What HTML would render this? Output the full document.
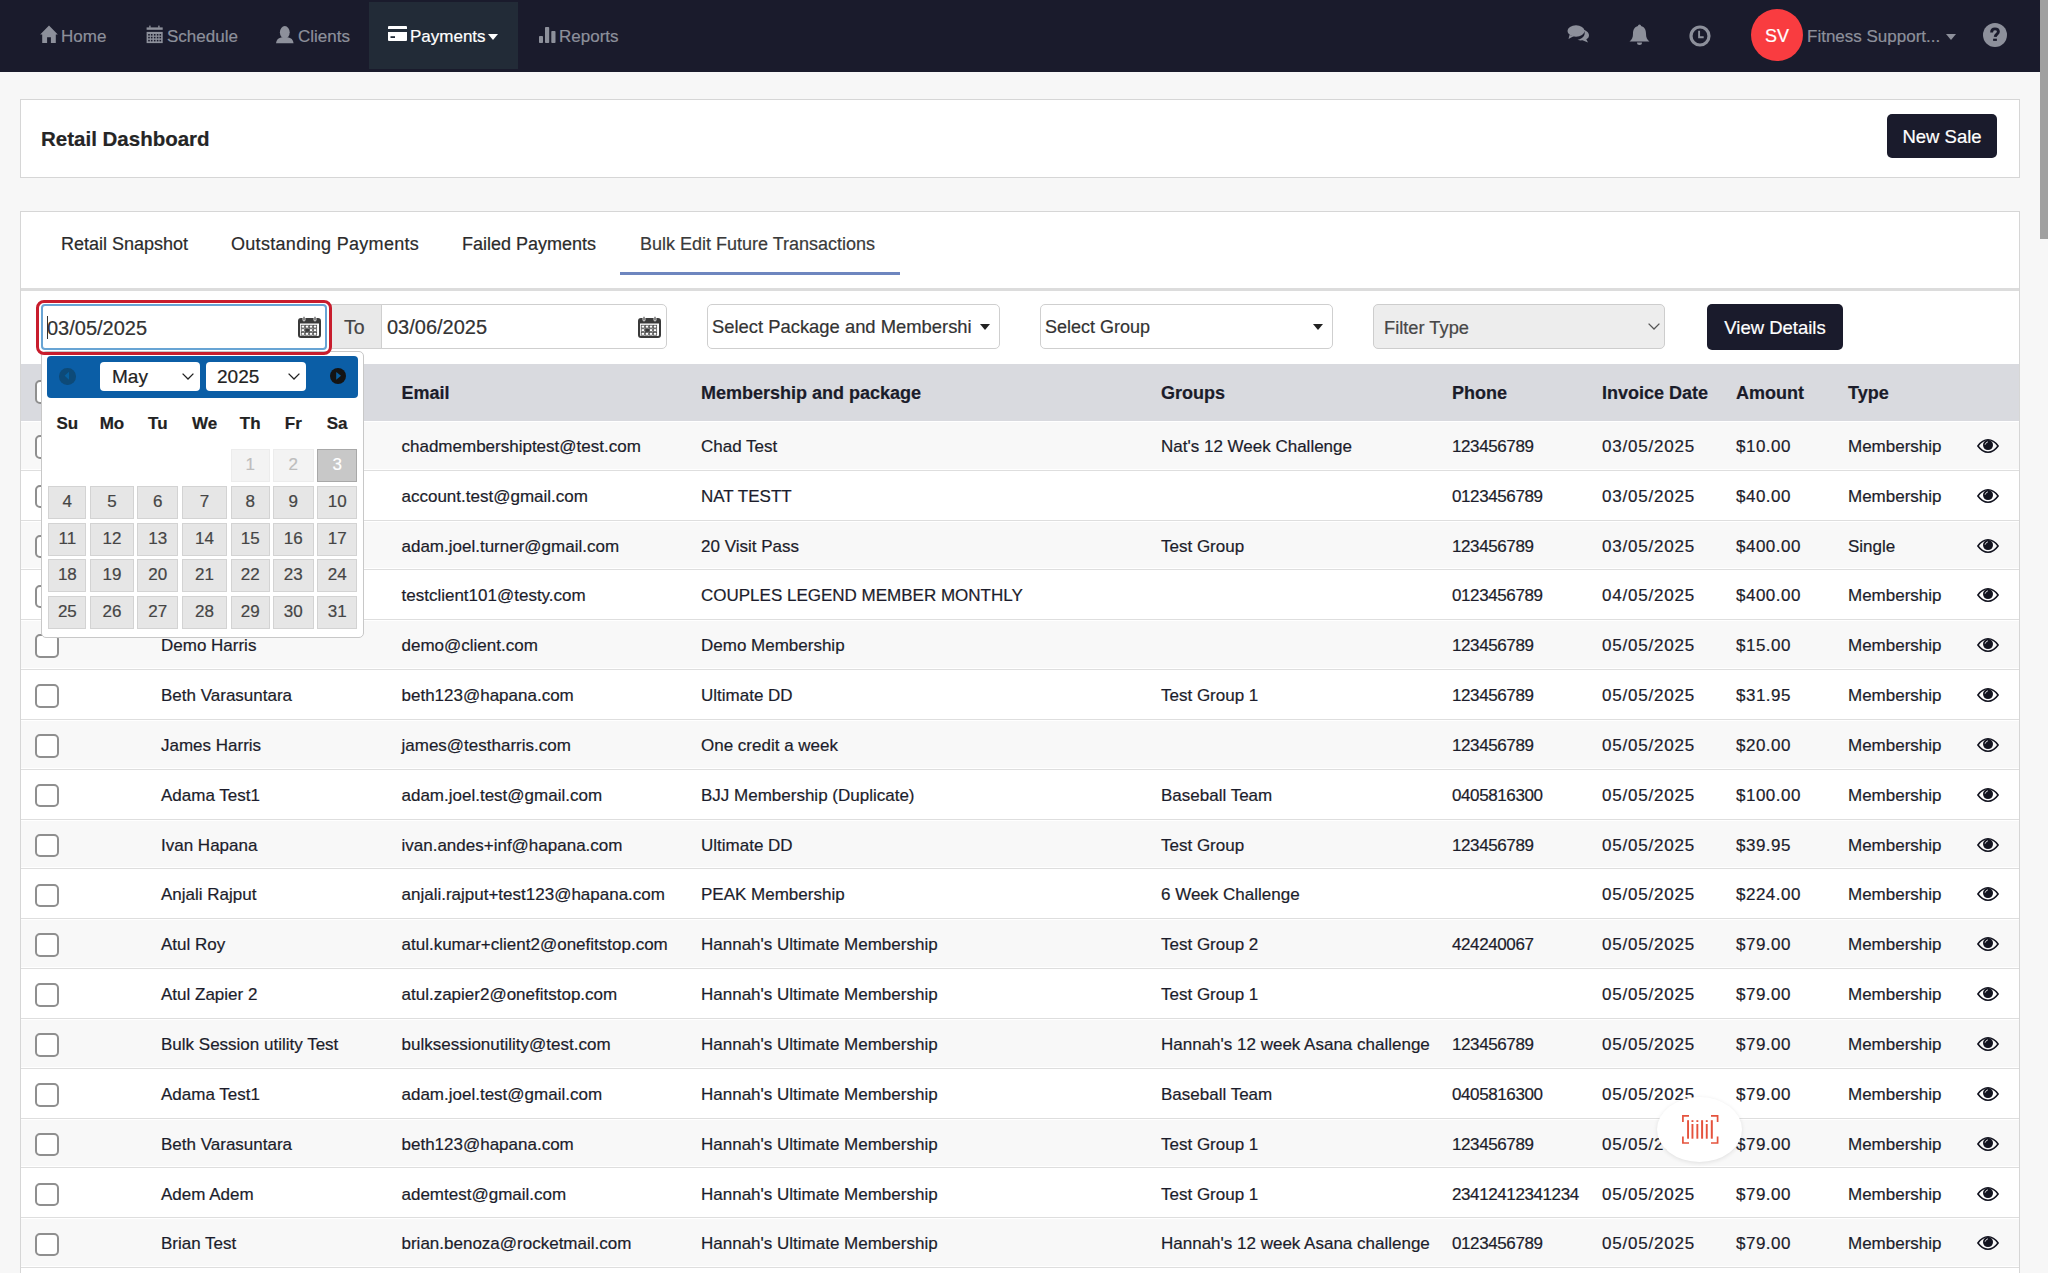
<!DOCTYPE html>
<html><head><meta charset="utf-8">
<style>
*{box-sizing:border-box;margin:0;padding:0}
html,body{width:2048px;height:1273px;overflow:hidden}
body{background:#f7f7f7;font-family:"Liberation Sans",sans-serif;color:#1b1c2a;position:relative;-webkit-text-stroke:0.2px currentColor}
.a{position:absolute}
.nt{position:absolute;top:0;height:72px;line-height:74px;font-size:17px;color:#8d909b;white-space:nowrap}
.ni{position:absolute;line-height:0}
.ni svg{display:block}
.card{position:absolute;background:#fff;border:1px solid #d6d6d6}
.tab{position:absolute;top:224px;line-height:40px;font-size:18px;color:#2b2b2b;white-space:nowrap}
.row{position:absolute;left:21px;width:1998px;height:49.84px;border-bottom:1px solid #dedede}
.row span{position:absolute;top:0;line-height:51px;font-size:17px;color:#1c1d2b;white-space:nowrap}
.cb{position:absolute;left:13.5px;top:14.2px;width:24px;height:23.5px;border:2px solid #8f8f8f;border-radius:5px;background:#fff}
.hd{position:absolute;top:364px;line-height:59px;font-size:18px;font-weight:bold;color:#1b1c2a;white-space:nowrap}
.eye{display:block}
.inp{position:absolute;background:#fff;border:1px solid #cfcfcf;border-radius:4px}
.itxt{position:absolute;font-size:19.5px;color:#333;white-space:nowrap;line-height:44px;top:0}
.cal{position:absolute;left:41px;top:351px;width:323px;height:287px;background:#fff;border:1px solid #c8c8c8;border-radius:5px}
.dn{position:absolute;top:407px;line-height:34px;font-size:17px;font-weight:bold;color:#222;white-space:nowrap}
.d{position:absolute;height:33px;line-height:30px;text-align:center;font-size:17px;color:#454545;background:#e6e6e6;border:1px solid #d3d3d3}
</style></head><body>

<div class="a" style="left:0;top:0;width:2040px;height:72px;background:#1a1b2c"></div>
<div class="a" style="left:369px;top:2px;width:149px;height:67px;background:#222b37"></div>
<div class="ni" style="left:40px;top:25px"><svg width="18" height="19" viewBox="0 0 18 19"><path d="M9 0.6 L17.8 9.6 L15.8 9.6 L15.8 18 L10.9 18 L10.9 12.2 L7.1 12.2 L7.1 18 L2.2 18 L2.2 9.6 L0.2 9.6 Z" fill="#8d909b"/></svg></div><div class="nt" style="left:61px">Home</div>
<div class="ni" style="left:146px;top:25px"><svg width="17" height="19" viewBox="0 0 17 19"><g fill="#8d909b"><rect x="3.2" y="0.6" width="1.4" height="2.2"/><rect x="12.2" y="0.6" width="1.4" height="2.2"/><rect x="0.6" y="2.4" width="16.1" height="2.4"/><rect x="0.6" y="6.9" width="16.1" height="11.2"/></g><g fill="#1a1b2c"><rect x="2.20" y="9.00" width="1.6" height="1.6"/><rect x="4.90" y="9.00" width="1.6" height="1.6"/><rect x="7.90" y="9.00" width="1.6" height="1.6"/><rect x="10.80" y="9.00" width="1.6" height="1.6"/><rect x="13.50" y="9.00" width="1.6" height="1.6"/><rect x="2.20" y="11.80" width="1.6" height="1.6"/><rect x="4.90" y="11.80" width="1.6" height="1.6"/><rect x="7.90" y="11.80" width="1.6" height="1.6"/><rect x="10.80" y="11.80" width="1.6" height="1.6"/><rect x="13.50" y="11.80" width="1.6" height="1.6"/><rect x="2.20" y="14.80" width="1.6" height="1.6"/><rect x="4.90" y="14.80" width="1.6" height="1.6"/><rect x="7.90" y="14.80" width="1.6" height="1.6"/><rect x="10.80" y="14.80" width="1.6" height="1.6"/><rect x="13.50" y="14.80" width="1.6" height="1.6"/></g></svg></div><div class="nt" style="left:167px">Schedule</div>
<div class="ni" style="left:276px;top:26px"><svg width="18" height="18" viewBox="0 0 18 18"><ellipse cx="8.8" cy="6.3" rx="4.9" ry="6.2" fill="#8d909b"/><path d="M0 17.2 C0.3 13.6 2.6 11.8 5.8 11.2 L11.8 11.2 C15 11.8 17.3 13.6 17.6 17.2 Z" fill="#8d909b"/></svg></div><div class="nt" style="left:298px">Clients</div>
<div class="ni" style="left:388px;top:26px"><svg width="19" height="15" viewBox="0 0 19 15"><rect x="0" y="0" width="19" height="15" rx="1" fill="#ffffff"/><rect x="0" y="3" width="19" height="3" fill="#222c38"/><rect x="2.5" y="10.2" width="4.5" height="1.8" fill="#222c38"/></svg></div><div class="nt" style="left:410px;color:#fff">Payments</div><div class="ni" style="left:488px;top:34px"><svg width="10" height="6" viewBox="0 0 10 6"><path d="M0 0 L10 0 L5 6 Z" fill="#ffffff"/></svg></div>
<div class="ni" style="left:539px;top:27px"><svg width="17" height="16" viewBox="0 0 17 16"><rect x="0" y="9" width="4" height="7" rx="0.8" fill="#8d909b"/><rect x="6" y="0" width="4.2" height="16" rx="0.8" fill="#8d909b"/><rect x="12.3" y="4" width="4.2" height="12" rx="0.8" fill="#8d909b"/></svg></div><div class="nt" style="left:559px">Reports</div>
<div class="ni" style="left:1567px;top:25px"><svg width="23" height="18" viewBox="0 0 23 18"><ellipse cx="9" cy="6" rx="8.5" ry="5.8" fill="#8d909b"/><path d="M2.5 10 L1.5 14 L7 11 Z" fill="#8d909b"/><path d="M14.5 4.3 C19 5 22 7.5 22 10.2 C22 12 21 13.4 19.3 14.3 L21 17.5 L15.5 15.3 C14 15.6 12 15.4 10.5 14.8 C15 14 18.5 11 17.5 7 C17 5.8 16 5 14.5 4.3 Z" fill="#8d909b"/></svg></div>
<div class="ni" style="left:1629px;top:24px"><svg width="21" height="22" viewBox="0 0 21 22"><path d="M10.5 0.5 C11.5 0.5 12 1.3 12 2 C15.5 2.8 17 5.8 17 9.5 C17 13.5 18 15.5 20.5 17.5 L0.5 17.5 C3 15.5 4 13.5 4 9.5 C4 5.8 5.5 2.8 9 2 C9 1.3 9.5 0.5 10.5 0.5 Z" fill="#8d909b"/><path d="M8 18.5 A2.5 2.5 0 0 0 13 18.5 Z" fill="#8d909b"/></svg></div>
<div class="ni" style="left:1689.3px;top:24.6px"><svg width="22" height="22" viewBox="0 0 22 22"><circle cx="11" cy="11" r="9" fill="none" stroke="#8d909b" stroke-width="3.2"/><path d="M10.1 5.8 V12.2 H14.7" fill="none" stroke="#8d909b" stroke-width="1.9"/></svg></div>
<div class="a" style="left:1751px;top:9px;width:52px;height:52px;border-radius:50%;background:#f93c40;color:#fff;font-size:18px;line-height:54px;text-align:center">SV</div>
<div class="nt" style="left:1807px">Fitness Support...</div><div class="ni" style="left:1946px;top:34px"><svg width="10" height="6" viewBox="0 0 10 6"><path d="M0 0 L10 0 L5 6 Z" fill="#8d909b"/></svg></div>
<div class="ni" style="left:1983px;top:23px"><svg width="24" height="24" viewBox="0 0 24 24"><circle cx="12" cy="12" r="12" fill="#8d909b"/><path d="M8.6 9.4 C8.6 7 10 5.9 11.9 5.9 C14 5.9 15.4 7.1 15.4 8.8 C15.4 10.9 12.4 11.3 12.2 13.8" fill="none" stroke="#1a1b2c" stroke-width="2.9"/><rect x="10.1" y="15.7" width="3.8" height="2.2" fill="#1a1b2c"/></svg></div>
<div class="a" style="left:2040px;top:0;width:8px;height:239px;background:#a0a0a0"></div>
<div class="card" style="left:20px;top:99px;width:2000px;height:79px"></div>
<div class="a" style="left:41px;top:99px;line-height:79px;font-size:20.5px;font-weight:bold;color:#252525">Retail Dashboard</div>
<div class="a" style="left:1887px;top:114px;width:110px;height:44px;background:#1a1b2c;border-radius:5px;color:#fff;font-size:18.5px;line-height:46px;text-align:center">New Sale</div>
<div class="card" style="left:20px;top:211px;width:2000px;height:1080px"></div>
<div class="tab" style="left:61px">Retail Snapshot</div>
<div class="tab" style="left:231px;letter-spacing:0.3px">Outstanding Payments</div>
<div class="tab" style="left:462px">Failed Payments</div>
<div class="tab" style="left:640px;color:#3a3a3a">Bulk Edit Future Transactions</div>
<div class="a" style="left:620px;top:272px;width:280px;height:3px;background:#6e86bf"></div>
<div class="a" style="left:21px;top:288px;width:1998px;height:3px;background:#dcdcdc"></div>
<div class="inp" style="left:41px;top:304px;width:286px;height:46px;border:2px solid #68a4d4"></div>
<div class="itxt" style="left:47px;top:305px;line-height:46px;font-size:20px">03/05/2025</div>
<div class="a" style="left:46.5px;top:316px;width:1.5px;height:23px;background:#333"></div>
<div class="ni" style="left:298px;top:316px"><svg width="23" height="22" viewBox="0 0 23 22"><rect x="1" y="3" width="21" height="18" rx="2" fill="none" stroke="#3a3a3a" stroke-width="2"/><rect x="1" y="3" width="21" height="4.5" fill="#3a3a3a"/><rect x="5" y="0.5" width="2" height="4.5" rx="1" fill="#3a3a3a" stroke="#fff" stroke-width="0.8"/><rect x="16" y="0.5" width="2" height="4.5" rx="1" fill="#3a3a3a" stroke="#fff" stroke-width="0.8"/><rect x="3.20" y="9.20" width="3.2" height="2.8" fill="none" stroke="#3a3a3a" stroke-width="0.7"/><rect x="7.30" y="9.20" width="3.2" height="2.8" fill="none" stroke="#3a3a3a" stroke-width="0.7"/><rect x="11.40" y="9.20" width="3.2" height="2.8" fill="none" stroke="#3a3a3a" stroke-width="0.7"/><rect x="15.50" y="9.20" width="3.2" height="2.8" fill="none" stroke="#3a3a3a" stroke-width="0.7"/><rect x="3.20" y="12.80" width="3.2" height="2.8" fill="none" stroke="#3a3a3a" stroke-width="0.7"/><rect x="7.30" y="12.80" width="3.2" height="2.8" fill="none" stroke="#3a3a3a" stroke-width="0.7"/><rect x="11.40" y="12.80" width="3.2" height="2.8" fill="none" stroke="#3a3a3a" stroke-width="0.7"/><rect x="15.50" y="12.80" width="3.2" height="2.8" fill="none" stroke="#3a3a3a" stroke-width="0.7"/><rect x="3.20" y="16.40" width="3.2" height="2.8" fill="none" stroke="#3a3a3a" stroke-width="0.7"/><rect x="7.30" y="16.40" width="3.2" height="2.8" fill="none" stroke="#3a3a3a" stroke-width="0.7"/><rect x="11.40" y="16.40" width="3.2" height="2.8" fill="none" stroke="#3a3a3a" stroke-width="0.7"/><rect x="15.50" y="16.40" width="3.2" height="2.8" fill="none" stroke="#3a3a3a" stroke-width="0.7"/><rect x="7.3" y="12.8" width="4.1" height="3" fill="#3a3a3a"/></svg></div>
<div class="a" style="left:331px;top:304px;width:51px;height:45px;background:#e9e9e9;border:1px solid #d0d0d0;border-right:none"></div>
<div class="itxt" style="left:344px;top:305px;line-height:45px;color:#444">To</div>
<div class="inp" style="left:381px;top:304px;width:286px;height:45px;border-radius:0 5px 5px 0"></div>
<div class="itxt" style="left:387px;top:305px;line-height:45px;font-size:20px">03/06/2025</div>
<div class="ni" style="left:638px;top:316px"><svg width="23" height="22" viewBox="0 0 23 22"><rect x="1" y="3" width="21" height="18" rx="2" fill="none" stroke="#3a3a3a" stroke-width="2"/><rect x="1" y="3" width="21" height="4.5" fill="#3a3a3a"/><rect x="5" y="0.5" width="2" height="4.5" rx="1" fill="#3a3a3a" stroke="#fff" stroke-width="0.8"/><rect x="16" y="0.5" width="2" height="4.5" rx="1" fill="#3a3a3a" stroke="#fff" stroke-width="0.8"/><rect x="3.20" y="9.20" width="3.2" height="2.8" fill="none" stroke="#3a3a3a" stroke-width="0.7"/><rect x="7.30" y="9.20" width="3.2" height="2.8" fill="none" stroke="#3a3a3a" stroke-width="0.7"/><rect x="11.40" y="9.20" width="3.2" height="2.8" fill="none" stroke="#3a3a3a" stroke-width="0.7"/><rect x="15.50" y="9.20" width="3.2" height="2.8" fill="none" stroke="#3a3a3a" stroke-width="0.7"/><rect x="3.20" y="12.80" width="3.2" height="2.8" fill="none" stroke="#3a3a3a" stroke-width="0.7"/><rect x="7.30" y="12.80" width="3.2" height="2.8" fill="none" stroke="#3a3a3a" stroke-width="0.7"/><rect x="11.40" y="12.80" width="3.2" height="2.8" fill="none" stroke="#3a3a3a" stroke-width="0.7"/><rect x="15.50" y="12.80" width="3.2" height="2.8" fill="none" stroke="#3a3a3a" stroke-width="0.7"/><rect x="3.20" y="16.40" width="3.2" height="2.8" fill="none" stroke="#3a3a3a" stroke-width="0.7"/><rect x="7.30" y="16.40" width="3.2" height="2.8" fill="none" stroke="#3a3a3a" stroke-width="0.7"/><rect x="11.40" y="16.40" width="3.2" height="2.8" fill="none" stroke="#3a3a3a" stroke-width="0.7"/><rect x="15.50" y="16.40" width="3.2" height="2.8" fill="none" stroke="#3a3a3a" stroke-width="0.7"/><rect x="7.3" y="12.8" width="4.1" height="3" fill="#3a3a3a"/></svg></div>
<div class="inp" style="left:707px;top:304px;width:293px;height:45px;border-radius:5px"></div>
<div class="itxt" style="left:712px;top:304px;line-height:45px;width:260px;overflow:hidden;font-size:18.4px">Select Package and Membership</div>
<div class="ni" style="left:980px;top:324px"><svg width="10" height="6" viewBox="0 0 10 6"><path d="M0 0 L10 0 L5 6 Z" fill="#222"/></svg></div>
<div class="inp" style="left:1040px;top:304px;width:293px;height:45px;border-radius:5px"></div>
<div class="itxt" style="left:1045px;top:305px;line-height:45px;font-size:18px">Select Group</div>
<div class="ni" style="left:1313px;top:324px"><svg width="10" height="6" viewBox="0 0 10 6"><path d="M0 0 L10 0 L5 6 Z" fill="#222"/></svg></div>
<div class="inp" style="left:1373px;top:304px;width:292px;height:45px;border-radius:5px;background:#ededed;border-color:#cdcdcd"></div>
<div class="itxt" style="left:1384px;top:305px;line-height:45px;color:#474747;font-size:18.3px">Filter Type</div>
<div class="ni" style="left:1648px;top:323px"><svg width="12" height="7" viewBox="0 0 12 7"><path d="M0.6 0.6 L6 6 L11.4 0.6" fill="none" stroke="#555" stroke-width="1.3"/></svg></div>
<div class="a" style="left:1707px;top:304px;width:136px;height:46px;background:#1a1b2c;border-radius:5px;color:#fff;font-size:18.5px;line-height:48px;text-align:center">View Details</div>
<div class="a" style="left:21px;top:364px;width:1998px;height:57px;background:#d9dadf"></div>
<div class="cb" style="left:34.5px;top:380px"></div>
<div class="hd" style="left:161px">Name</div>
<div class="hd" style="left:401.5px">Email</div>
<div class="hd" style="left:701px">Membership and package</div>
<div class="hd" style="left:1161px">Groups</div>
<div class="hd" style="left:1452px">Phone</div>
<div class="hd" style="left:1602px">Invoice Date</div>
<div class="hd" style="left:1736px">Amount</div>
<div class="hd" style="left:1848px">Type</div>
<div class="row" style="top:420.90px;background:#f8f8f8;box-shadow:inset 0 1px 0 #fff,inset 0 -1px 0 #fff"><div class="cb"></div><span style="left:140.0px">Chad Test</span><span style="left:380.5px">chadmembershiptest@test.com</span><span style="left:680.0px">Chad Test</span><span style="left:1140.0px">Nat&#39;s 12 Week Challenge</span><span style="left:1431.0px;letter-spacing:-0.4px">123456789</span><span style="left:1581.0px;letter-spacing:0.8px">03/05/2025</span><span style="left:1715.0px;letter-spacing:0.5px">$10.00</span><span style="left:1827.0px">Membership</span><div style="position:absolute;left:1956.4px;top:18px"><svg class="eye" width="22" height="14" viewBox="0 0 22 14"><path d="M0.9 7 C4.5 2 8 0.8 11 0.8 C14 0.8 17.5 2 21.1 7 C17.5 12 14 13.2 11 13.2 C8 13.2 4.5 12 0.9 7 Z" fill="none" stroke="#12131f" stroke-width="1.6"/><circle cx="11" cy="6.1" r="5" fill="#12131f"/><path d="M8.2 5.3 A3.2 3.2 0 0 1 10.6 2.9" stroke="#fff" stroke-width="0.8" fill="none" stroke-linecap="round"/></svg></div></div>
<div class="row" style="top:470.74px;background:#ffffff"><div class="cb"></div><span style="left:140.0px">Nat Test</span><span style="left:380.5px">account.test@gmail.com</span><span style="left:680.0px">NAT TESTT</span><span style="left:1431.0px;letter-spacing:-0.4px">0123456789</span><span style="left:1581.0px;letter-spacing:0.8px">03/05/2025</span><span style="left:1715.0px;letter-spacing:0.5px">$40.00</span><span style="left:1827.0px">Membership</span><div style="position:absolute;left:1956.4px;top:18px"><svg class="eye" width="22" height="14" viewBox="0 0 22 14"><path d="M0.9 7 C4.5 2 8 0.8 11 0.8 C14 0.8 17.5 2 21.1 7 C17.5 12 14 13.2 11 13.2 C8 13.2 4.5 12 0.9 7 Z" fill="none" stroke="#12131f" stroke-width="1.6"/><circle cx="11" cy="6.1" r="5" fill="#12131f"/><path d="M8.2 5.3 A3.2 3.2 0 0 1 10.6 2.9" stroke="#fff" stroke-width="0.8" fill="none" stroke-linecap="round"/></svg></div></div>
<div class="row" style="top:520.58px;background:#f8f8f8;box-shadow:inset 0 1px 0 #fff,inset 0 -1px 0 #fff"><div class="cb"></div><span style="left:140.0px">Adam Turner</span><span style="left:380.5px">adam.joel.turner@gmail.com</span><span style="left:680.0px">20 Visit Pass</span><span style="left:1140.0px">Test Group</span><span style="left:1431.0px;letter-spacing:-0.4px">123456789</span><span style="left:1581.0px;letter-spacing:0.8px">03/05/2025</span><span style="left:1715.0px;letter-spacing:0.5px">$400.00</span><span style="left:1827.0px">Single</span><div style="position:absolute;left:1956.4px;top:18px"><svg class="eye" width="22" height="14" viewBox="0 0 22 14"><path d="M0.9 7 C4.5 2 8 0.8 11 0.8 C14 0.8 17.5 2 21.1 7 C17.5 12 14 13.2 11 13.2 C8 13.2 4.5 12 0.9 7 Z" fill="none" stroke="#12131f" stroke-width="1.6"/><circle cx="11" cy="6.1" r="5" fill="#12131f"/><path d="M8.2 5.3 A3.2 3.2 0 0 1 10.6 2.9" stroke="#fff" stroke-width="0.8" fill="none" stroke-linecap="round"/></svg></div></div>
<div class="row" style="top:570.42px;background:#ffffff"><div class="cb"></div><span style="left:140.0px">Test Client</span><span style="left:380.5px">testclient101@testy.com</span><span style="left:680.0px">COUPLES LEGEND MEMBER MONTHLY</span><span style="left:1431.0px;letter-spacing:-0.4px">0123456789</span><span style="left:1581.0px;letter-spacing:0.8px">04/05/2025</span><span style="left:1715.0px;letter-spacing:0.5px">$400.00</span><span style="left:1827.0px">Membership</span><div style="position:absolute;left:1956.4px;top:18px"><svg class="eye" width="22" height="14" viewBox="0 0 22 14"><path d="M0.9 7 C4.5 2 8 0.8 11 0.8 C14 0.8 17.5 2 21.1 7 C17.5 12 14 13.2 11 13.2 C8 13.2 4.5 12 0.9 7 Z" fill="none" stroke="#12131f" stroke-width="1.6"/><circle cx="11" cy="6.1" r="5" fill="#12131f"/><path d="M8.2 5.3 A3.2 3.2 0 0 1 10.6 2.9" stroke="#fff" stroke-width="0.8" fill="none" stroke-linecap="round"/></svg></div></div>
<div class="row" style="top:620.26px;background:#f8f8f8;box-shadow:inset 0 1px 0 #fff,inset 0 -1px 0 #fff"><div class="cb"></div><span style="left:140.0px">Demo Harris</span><span style="left:380.5px">demo@client.com</span><span style="left:680.0px">Demo Membership</span><span style="left:1431.0px;letter-spacing:-0.4px">123456789</span><span style="left:1581.0px;letter-spacing:0.8px">05/05/2025</span><span style="left:1715.0px;letter-spacing:0.5px">$15.00</span><span style="left:1827.0px">Membership</span><div style="position:absolute;left:1956.4px;top:18px"><svg class="eye" width="22" height="14" viewBox="0 0 22 14"><path d="M0.9 7 C4.5 2 8 0.8 11 0.8 C14 0.8 17.5 2 21.1 7 C17.5 12 14 13.2 11 13.2 C8 13.2 4.5 12 0.9 7 Z" fill="none" stroke="#12131f" stroke-width="1.6"/><circle cx="11" cy="6.1" r="5" fill="#12131f"/><path d="M8.2 5.3 A3.2 3.2 0 0 1 10.6 2.9" stroke="#fff" stroke-width="0.8" fill="none" stroke-linecap="round"/></svg></div></div>
<div class="row" style="top:670.10px;background:#ffffff"><div class="cb"></div><span style="left:140.0px">Beth Varasuntara</span><span style="left:380.5px">beth123@hapana.com</span><span style="left:680.0px">Ultimate DD</span><span style="left:1140.0px">Test Group 1</span><span style="left:1431.0px;letter-spacing:-0.4px">123456789</span><span style="left:1581.0px;letter-spacing:0.8px">05/05/2025</span><span style="left:1715.0px;letter-spacing:0.5px">$31.95</span><span style="left:1827.0px">Membership</span><div style="position:absolute;left:1956.4px;top:18px"><svg class="eye" width="22" height="14" viewBox="0 0 22 14"><path d="M0.9 7 C4.5 2 8 0.8 11 0.8 C14 0.8 17.5 2 21.1 7 C17.5 12 14 13.2 11 13.2 C8 13.2 4.5 12 0.9 7 Z" fill="none" stroke="#12131f" stroke-width="1.6"/><circle cx="11" cy="6.1" r="5" fill="#12131f"/><path d="M8.2 5.3 A3.2 3.2 0 0 1 10.6 2.9" stroke="#fff" stroke-width="0.8" fill="none" stroke-linecap="round"/></svg></div></div>
<div class="row" style="top:719.94px;background:#f8f8f8;box-shadow:inset 0 1px 0 #fff,inset 0 -1px 0 #fff"><div class="cb"></div><span style="left:140.0px">James Harris</span><span style="left:380.5px">james@testharris.com</span><span style="left:680.0px">One credit a week</span><span style="left:1431.0px;letter-spacing:-0.4px">123456789</span><span style="left:1581.0px;letter-spacing:0.8px">05/05/2025</span><span style="left:1715.0px;letter-spacing:0.5px">$20.00</span><span style="left:1827.0px">Membership</span><div style="position:absolute;left:1956.4px;top:18px"><svg class="eye" width="22" height="14" viewBox="0 0 22 14"><path d="M0.9 7 C4.5 2 8 0.8 11 0.8 C14 0.8 17.5 2 21.1 7 C17.5 12 14 13.2 11 13.2 C8 13.2 4.5 12 0.9 7 Z" fill="none" stroke="#12131f" stroke-width="1.6"/><circle cx="11" cy="6.1" r="5" fill="#12131f"/><path d="M8.2 5.3 A3.2 3.2 0 0 1 10.6 2.9" stroke="#fff" stroke-width="0.8" fill="none" stroke-linecap="round"/></svg></div></div>
<div class="row" style="top:769.78px;background:#ffffff"><div class="cb"></div><span style="left:140.0px">Adama Test1</span><span style="left:380.5px">adam.joel.test@gmail.com</span><span style="left:680.0px">BJJ Membership (Duplicate)</span><span style="left:1140.0px">Baseball Team</span><span style="left:1431.0px;letter-spacing:-0.4px">0405816300</span><span style="left:1581.0px;letter-spacing:0.8px">05/05/2025</span><span style="left:1715.0px;letter-spacing:0.5px">$100.00</span><span style="left:1827.0px">Membership</span><div style="position:absolute;left:1956.4px;top:18px"><svg class="eye" width="22" height="14" viewBox="0 0 22 14"><path d="M0.9 7 C4.5 2 8 0.8 11 0.8 C14 0.8 17.5 2 21.1 7 C17.5 12 14 13.2 11 13.2 C8 13.2 4.5 12 0.9 7 Z" fill="none" stroke="#12131f" stroke-width="1.6"/><circle cx="11" cy="6.1" r="5" fill="#12131f"/><path d="M8.2 5.3 A3.2 3.2 0 0 1 10.6 2.9" stroke="#fff" stroke-width="0.8" fill="none" stroke-linecap="round"/></svg></div></div>
<div class="row" style="top:819.62px;background:#f8f8f8;box-shadow:inset 0 1px 0 #fff,inset 0 -1px 0 #fff"><div class="cb"></div><span style="left:140.0px">Ivan Hapana</span><span style="left:380.5px">ivan.andes+inf@hapana.com</span><span style="left:680.0px">Ultimate DD</span><span style="left:1140.0px">Test Group</span><span style="left:1431.0px;letter-spacing:-0.4px">123456789</span><span style="left:1581.0px;letter-spacing:0.8px">05/05/2025</span><span style="left:1715.0px;letter-spacing:0.5px">$39.95</span><span style="left:1827.0px">Membership</span><div style="position:absolute;left:1956.4px;top:18px"><svg class="eye" width="22" height="14" viewBox="0 0 22 14"><path d="M0.9 7 C4.5 2 8 0.8 11 0.8 C14 0.8 17.5 2 21.1 7 C17.5 12 14 13.2 11 13.2 C8 13.2 4.5 12 0.9 7 Z" fill="none" stroke="#12131f" stroke-width="1.6"/><circle cx="11" cy="6.1" r="5" fill="#12131f"/><path d="M8.2 5.3 A3.2 3.2 0 0 1 10.6 2.9" stroke="#fff" stroke-width="0.8" fill="none" stroke-linecap="round"/></svg></div></div>
<div class="row" style="top:869.46px;background:#ffffff"><div class="cb"></div><span style="left:140.0px">Anjali Rajput</span><span style="left:380.5px">anjali.rajput+test123@hapana.com</span><span style="left:680.0px">PEAK Membership</span><span style="left:1140.0px">6 Week Challenge</span><span style="left:1581.0px;letter-spacing:0.8px">05/05/2025</span><span style="left:1715.0px;letter-spacing:0.5px">$224.00</span><span style="left:1827.0px">Membership</span><div style="position:absolute;left:1956.4px;top:18px"><svg class="eye" width="22" height="14" viewBox="0 0 22 14"><path d="M0.9 7 C4.5 2 8 0.8 11 0.8 C14 0.8 17.5 2 21.1 7 C17.5 12 14 13.2 11 13.2 C8 13.2 4.5 12 0.9 7 Z" fill="none" stroke="#12131f" stroke-width="1.6"/><circle cx="11" cy="6.1" r="5" fill="#12131f"/><path d="M8.2 5.3 A3.2 3.2 0 0 1 10.6 2.9" stroke="#fff" stroke-width="0.8" fill="none" stroke-linecap="round"/></svg></div></div>
<div class="row" style="top:919.30px;background:#f8f8f8;box-shadow:inset 0 1px 0 #fff,inset 0 -1px 0 #fff"><div class="cb"></div><span style="left:140.0px">Atul Roy</span><span style="left:380.5px">atul.kumar+client2@onefitstop.com</span><span style="left:680.0px">Hannah&#39;s Ultimate Membership</span><span style="left:1140.0px">Test Group 2</span><span style="left:1431.0px;letter-spacing:-0.4px">424240067</span><span style="left:1581.0px;letter-spacing:0.8px">05/05/2025</span><span style="left:1715.0px;letter-spacing:0.5px">$79.00</span><span style="left:1827.0px">Membership</span><div style="position:absolute;left:1956.4px;top:18px"><svg class="eye" width="22" height="14" viewBox="0 0 22 14"><path d="M0.9 7 C4.5 2 8 0.8 11 0.8 C14 0.8 17.5 2 21.1 7 C17.5 12 14 13.2 11 13.2 C8 13.2 4.5 12 0.9 7 Z" fill="none" stroke="#12131f" stroke-width="1.6"/><circle cx="11" cy="6.1" r="5" fill="#12131f"/><path d="M8.2 5.3 A3.2 3.2 0 0 1 10.6 2.9" stroke="#fff" stroke-width="0.8" fill="none" stroke-linecap="round"/></svg></div></div>
<div class="row" style="top:969.14px;background:#ffffff"><div class="cb"></div><span style="left:140.0px">Atul Zapier 2</span><span style="left:380.5px">atul.zapier2@onefitstop.com</span><span style="left:680.0px">Hannah&#39;s Ultimate Membership</span><span style="left:1140.0px">Test Group 1</span><span style="left:1581.0px;letter-spacing:0.8px">05/05/2025</span><span style="left:1715.0px;letter-spacing:0.5px">$79.00</span><span style="left:1827.0px">Membership</span><div style="position:absolute;left:1956.4px;top:18px"><svg class="eye" width="22" height="14" viewBox="0 0 22 14"><path d="M0.9 7 C4.5 2 8 0.8 11 0.8 C14 0.8 17.5 2 21.1 7 C17.5 12 14 13.2 11 13.2 C8 13.2 4.5 12 0.9 7 Z" fill="none" stroke="#12131f" stroke-width="1.6"/><circle cx="11" cy="6.1" r="5" fill="#12131f"/><path d="M8.2 5.3 A3.2 3.2 0 0 1 10.6 2.9" stroke="#fff" stroke-width="0.8" fill="none" stroke-linecap="round"/></svg></div></div>
<div class="row" style="top:1018.98px;background:#f8f8f8;box-shadow:inset 0 1px 0 #fff,inset 0 -1px 0 #fff"><div class="cb"></div><span style="left:140.0px">Bulk Session utility Test</span><span style="left:380.5px">bulksessionutility@test.com</span><span style="left:680.0px">Hannah&#39;s Ultimate Membership</span><span style="left:1140.0px">Hannah&#39;s 12 week Asana challenge</span><span style="left:1431.0px;letter-spacing:-0.4px">123456789</span><span style="left:1581.0px;letter-spacing:0.8px">05/05/2025</span><span style="left:1715.0px;letter-spacing:0.5px">$79.00</span><span style="left:1827.0px">Membership</span><div style="position:absolute;left:1956.4px;top:18px"><svg class="eye" width="22" height="14" viewBox="0 0 22 14"><path d="M0.9 7 C4.5 2 8 0.8 11 0.8 C14 0.8 17.5 2 21.1 7 C17.5 12 14 13.2 11 13.2 C8 13.2 4.5 12 0.9 7 Z" fill="none" stroke="#12131f" stroke-width="1.6"/><circle cx="11" cy="6.1" r="5" fill="#12131f"/><path d="M8.2 5.3 A3.2 3.2 0 0 1 10.6 2.9" stroke="#fff" stroke-width="0.8" fill="none" stroke-linecap="round"/></svg></div></div>
<div class="row" style="top:1068.82px;background:#ffffff"><div class="cb"></div><span style="left:140.0px">Adama Test1</span><span style="left:380.5px">adam.joel.test@gmail.com</span><span style="left:680.0px">Hannah&#39;s Ultimate Membership</span><span style="left:1140.0px">Baseball Team</span><span style="left:1431.0px;letter-spacing:-0.4px">0405816300</span><span style="left:1581.0px;letter-spacing:0.8px">05/05/2025</span><span style="left:1715.0px;letter-spacing:0.5px">$79.00</span><span style="left:1827.0px">Membership</span><div style="position:absolute;left:1956.4px;top:18px"><svg class="eye" width="22" height="14" viewBox="0 0 22 14"><path d="M0.9 7 C4.5 2 8 0.8 11 0.8 C14 0.8 17.5 2 21.1 7 C17.5 12 14 13.2 11 13.2 C8 13.2 4.5 12 0.9 7 Z" fill="none" stroke="#12131f" stroke-width="1.6"/><circle cx="11" cy="6.1" r="5" fill="#12131f"/><path d="M8.2 5.3 A3.2 3.2 0 0 1 10.6 2.9" stroke="#fff" stroke-width="0.8" fill="none" stroke-linecap="round"/></svg></div></div>
<div class="row" style="top:1118.66px;background:#f8f8f8;box-shadow:inset 0 1px 0 #fff,inset 0 -1px 0 #fff"><div class="cb"></div><span style="left:140.0px">Beth Varasuntara</span><span style="left:380.5px">beth123@hapana.com</span><span style="left:680.0px">Hannah&#39;s Ultimate Membership</span><span style="left:1140.0px">Test Group 1</span><span style="left:1431.0px;letter-spacing:-0.4px">123456789</span><span style="left:1581.0px;letter-spacing:0.8px">05/05/2025</span><span style="left:1715.0px;letter-spacing:0.5px">$79.00</span><span style="left:1827.0px">Membership</span><div style="position:absolute;left:1956.4px;top:18px"><svg class="eye" width="22" height="14" viewBox="0 0 22 14"><path d="M0.9 7 C4.5 2 8 0.8 11 0.8 C14 0.8 17.5 2 21.1 7 C17.5 12 14 13.2 11 13.2 C8 13.2 4.5 12 0.9 7 Z" fill="none" stroke="#12131f" stroke-width="1.6"/><circle cx="11" cy="6.1" r="5" fill="#12131f"/><path d="M8.2 5.3 A3.2 3.2 0 0 1 10.6 2.9" stroke="#fff" stroke-width="0.8" fill="none" stroke-linecap="round"/></svg></div></div>
<div class="row" style="top:1168.50px;background:#ffffff"><div class="cb"></div><span style="left:140.0px">Adem Adem</span><span style="left:380.5px">ademtest@gmail.com</span><span style="left:680.0px">Hannah&#39;s Ultimate Membership</span><span style="left:1140.0px">Test Group 1</span><span style="left:1431.0px;letter-spacing:-0.4px">23412412341234</span><span style="left:1581.0px;letter-spacing:0.8px">05/05/2025</span><span style="left:1715.0px;letter-spacing:0.5px">$79.00</span><span style="left:1827.0px">Membership</span><div style="position:absolute;left:1956.4px;top:18px"><svg class="eye" width="22" height="14" viewBox="0 0 22 14"><path d="M0.9 7 C4.5 2 8 0.8 11 0.8 C14 0.8 17.5 2 21.1 7 C17.5 12 14 13.2 11 13.2 C8 13.2 4.5 12 0.9 7 Z" fill="none" stroke="#12131f" stroke-width="1.6"/><circle cx="11" cy="6.1" r="5" fill="#12131f"/><path d="M8.2 5.3 A3.2 3.2 0 0 1 10.6 2.9" stroke="#fff" stroke-width="0.8" fill="none" stroke-linecap="round"/></svg></div></div>
<div class="row" style="top:1218.34px;background:#f8f8f8;box-shadow:inset 0 1px 0 #fff,inset 0 -1px 0 #fff"><div class="cb"></div><span style="left:140.0px">Brian Test</span><span style="left:380.5px">brian.benoza@rocketmail.com</span><span style="left:680.0px">Hannah&#39;s Ultimate Membership</span><span style="left:1140.0px">Hannah&#39;s 12 week Asana challenge</span><span style="left:1431.0px;letter-spacing:-0.4px">0123456789</span><span style="left:1581.0px;letter-spacing:0.8px">05/05/2025</span><span style="left:1715.0px;letter-spacing:0.5px">$79.00</span><span style="left:1827.0px">Membership</span><div style="position:absolute;left:1956.4px;top:18px"><svg class="eye" width="22" height="14" viewBox="0 0 22 14"><path d="M0.9 7 C4.5 2 8 0.8 11 0.8 C14 0.8 17.5 2 21.1 7 C17.5 12 14 13.2 11 13.2 C8 13.2 4.5 12 0.9 7 Z" fill="none" stroke="#12131f" stroke-width="1.6"/><circle cx="11" cy="6.1" r="5" fill="#12131f"/><path d="M8.2 5.3 A3.2 3.2 0 0 1 10.6 2.9" stroke="#fff" stroke-width="0.8" fill="none" stroke-linecap="round"/></svg></div></div>
<div class="row" style="top:1268.18px;background:#ffffff"><div class="cb"></div></div>
<div class="a" style="left:1657px;top:1097px;width:85px;height:65px;border-radius:50%/50%;background:#fff;box-shadow:0 1px 4px rgba(0,0,0,0.10)"></div>
<div class="ni" style="left:1682px;top:1115px"><svg width="37" height="30" viewBox="0 0 37 30"><g fill="none" stroke="#e5533d" stroke-width="1.7"><path d="M7 0.9 H0.9 V7"/><path d="M29 0.9 H35.6 V7"/><path d="M0.9 21.5 V28 H7"/><path d="M35.6 21.5 V28 H29"/></g><g fill="#e5533d"><rect x="5.1" y="5.2" width="1.9" height="18.5"/><rect x="9.5" y="5.2" width="1.9" height="1.8"/><rect x="9.5" y="9" width="1.9" height="14.7"/><rect x="14.4" y="5.2" width="1.9" height="1.8"/><rect x="14.4" y="9" width="1.9" height="14.7"/><rect x="19.1" y="5.2" width="2" height="18.5"/><rect x="23.8" y="5.2" width="1.9" height="1.8"/><rect x="23.8" y="9" width="1.9" height="14.7"/><rect x="28.8" y="5.2" width="2" height="18.5"/></g></svg></div>
<div class="cal"></div>
<div class="a" style="left:47px;top:356px;width:311px;height:42px;background:#0b5ea6;border-radius:4px"></div>
<div class="a" style="left:59px;top:368px;width:16.5px;height:16.5px;border-radius:50%;background:#0d4a78"></div>
<svg class="a" style="left:59px;top:368px" width="17" height="17" viewBox="0 0 17 17"><path d="M10 3.8 L5.6 7.8 L10 11.8 Z" fill="#0760a0"/></svg>
<div class="a" style="left:330.3px;top:368px;width:16px;height:16px;border-radius:50%;background:#141414"></div>
<svg class="a" style="left:330.3px;top:368px" width="16" height="16" viewBox="0 0 16 16"><path d="M6.2 4 L11 7.8 L6.2 11.8 Z" fill="#0a5fa0"/></svg>
<div class="a" style="left:100px;top:362px;width:100px;height:29px;background:#fff;border-radius:4px"></div>
<div class="a" style="left:112px;top:362px;line-height:30px;font-size:19px;color:#222">May</div>
<div class="ni" style="left:182px;top:373px"><svg width="12" height="7" viewBox="0 0 12 7"><path d="M0.6 0.6 L6 6 L11.4 0.6" fill="none" stroke="#222" stroke-width="1.3"/></svg></div>
<div class="a" style="left:206px;top:362px;width:100px;height:29px;background:#fff;border-radius:4px"></div>
<div class="a" style="left:217px;top:362px;line-height:30px;font-size:19px;color:#222">2025</div>
<div class="ni" style="left:288px;top:373px"><svg width="12" height="7" viewBox="0 0 12 7"><path d="M0.6 0.6 L6 6 L11.4 0.6" fill="none" stroke="#222" stroke-width="1.3"/></svg></div>
<div class="dn" style="left:48.2px;width:38.3px;text-align:center">Su</div>
<div class="dn" style="left:90.2px;width:43.6px;text-align:center">Mo</div>
<div class="dn" style="left:137.3px;width:41.0px;text-align:center">Tu</div>
<div class="dn" style="left:181.6px;width:45.9px;text-align:center">We</div>
<div class="dn" style="left:231.0px;width:38.5px;text-align:center">Th</div>
<div class="dn" style="left:272.7px;width:41.2px;text-align:center">Fr</div>
<div class="dn" style="left:317.4px;width:39.6px;text-align:center">Sa</div>
<div class="d" style="left:231.0px;top:449.2px;width:38.5px;background:#f3f3f3;border-color:#ececec;color:#bdbdbd">1</div>
<div class="d" style="left:272.7px;top:449.2px;width:41.2px;background:#f3f3f3;border-color:#ececec;color:#bdbdbd">2</div>
<div class="d" style="left:317.4px;top:449.2px;width:39.6px;background:#c8c8c8;border-color:#a8a8a8;color:#fff">3</div>
<div class="d" style="left:48.2px;top:486.3px;width:38.3px">4</div>
<div class="d" style="left:90.2px;top:486.3px;width:43.6px">5</div>
<div class="d" style="left:137.3px;top:486.3px;width:41.0px">6</div>
<div class="d" style="left:181.6px;top:486.3px;width:45.9px">7</div>
<div class="d" style="left:231.0px;top:486.3px;width:38.5px">8</div>
<div class="d" style="left:272.7px;top:486.3px;width:41.2px">9</div>
<div class="d" style="left:317.4px;top:486.3px;width:39.6px">10</div>
<div class="d" style="left:48.2px;top:522.6px;width:38.3px">11</div>
<div class="d" style="left:90.2px;top:522.6px;width:43.6px">12</div>
<div class="d" style="left:137.3px;top:522.6px;width:41.0px">13</div>
<div class="d" style="left:181.6px;top:522.6px;width:45.9px">14</div>
<div class="d" style="left:231.0px;top:522.6px;width:38.5px">15</div>
<div class="d" style="left:272.7px;top:522.6px;width:41.2px">16</div>
<div class="d" style="left:317.4px;top:522.6px;width:39.6px">17</div>
<div class="d" style="left:48.2px;top:559.1px;width:38.3px">18</div>
<div class="d" style="left:90.2px;top:559.1px;width:43.6px">19</div>
<div class="d" style="left:137.3px;top:559.1px;width:41.0px">20</div>
<div class="d" style="left:181.6px;top:559.1px;width:45.9px">21</div>
<div class="d" style="left:231.0px;top:559.1px;width:38.5px">22</div>
<div class="d" style="left:272.7px;top:559.1px;width:41.2px">23</div>
<div class="d" style="left:317.4px;top:559.1px;width:39.6px">24</div>
<div class="d" style="left:48.2px;top:595.7px;width:38.3px">25</div>
<div class="d" style="left:90.2px;top:595.7px;width:43.6px">26</div>
<div class="d" style="left:137.3px;top:595.7px;width:41.0px">27</div>
<div class="d" style="left:181.6px;top:595.7px;width:45.9px">28</div>
<div class="d" style="left:231.0px;top:595.7px;width:38.5px">29</div>
<div class="d" style="left:272.7px;top:595.7px;width:41.2px">30</div>
<div class="d" style="left:317.4px;top:595.7px;width:39.6px">31</div>
<div class="a" style="left:36px;top:299.5px;width:296px;height:55px;border:3px solid #c81d2d;border-radius:8px"></div>
</body></html>
